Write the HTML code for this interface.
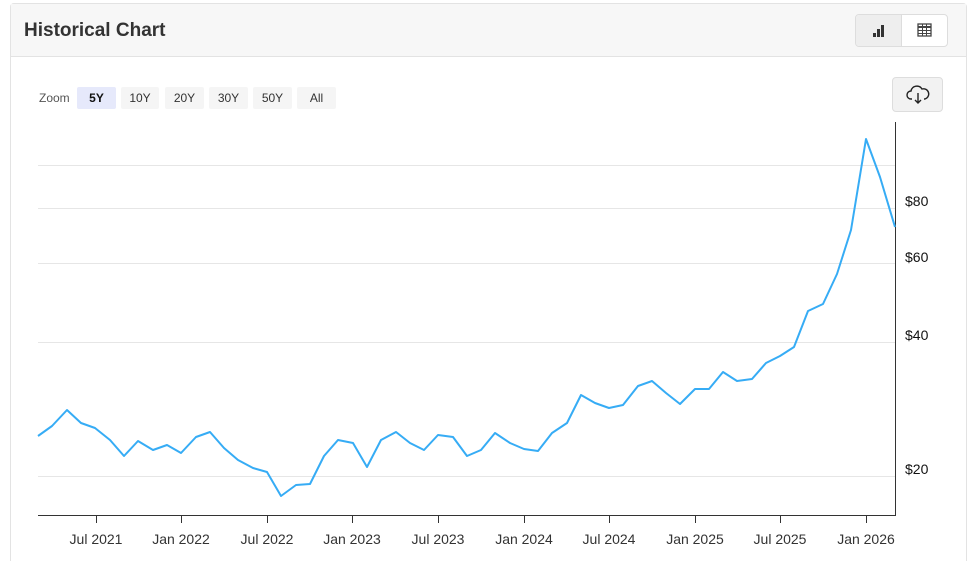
<!DOCTYPE html><html><head><style>
html,body{margin:0;width:972px;height:561px;overflow:hidden}
body{background:#fff;font-family:"Liberation Sans",sans-serif;position:relative}
.card{position:absolute;left:10px;top:3px;width:957px;height:558px;border:1px solid #e3e3e3;border-bottom:none;border-radius:4px 4px 0 0;box-sizing:border-box}
.hdr{position:absolute;left:0;top:0;right:0;height:53px;background:#f7f7f7;border-bottom:1px solid #e3e3e3;box-sizing:border-box}
.t{position:absolute;left:13px;top:16px;font-size:19px;font-weight:bold;color:#333}
.tg{position:absolute;left:844px;top:10px;width:91px;height:31px;border:1px solid #ddd;border-radius:4px;background:#fff;overflow:hidden}
.tg .a{position:absolute;left:0;top:0;width:45px;height:31px;background:#eee;border-right:1px solid #ddd}
.z{position:absolute;top:87px;height:22px;line-height:22px;font-size:12px;color:#333;text-align:center;background:#f5f5f5;border-radius:2px}
.dl{position:absolute;left:892px;top:77px;width:49px;height:33px;background:#f2f2f2;border:1px solid #ddd;border-radius:4px}
</style></head><body>
<div class="card"><div class="hdr"><div class="t">Historical Chart</div>
<div class="tg"><div class="a"><svg width="45" height="31"><rect x="17" y="18" width="3" height="4" fill="#333"/><rect x="21" y="14" width="3" height="8" fill="#333"/><rect x="25" y="10" width="3" height="12" fill="#333"/></svg></div>
<svg style="position:absolute;left:46px;top:0" width="45" height="31"><rect x="16" y="9" width="13" height="12" fill="none" stroke="#444" stroke-width="1.3"/><line x1="16" y1="12" x2="29" y2="12" stroke="#444" stroke-width="2"/><line x1="16" y1="15.5" x2="29" y2="15.5" stroke="#444"/><line x1="16" y1="18.5" x2="29" y2="18.5" stroke="#444"/><line x1="20.5" y1="9" x2="20.5" y2="21" stroke="#444"/><line x1="24.5" y1="9" x2="24.5" y2="21" stroke="#444"/></svg></div></div></div>
<div style="position:absolute;left:39px;top:91px;font-size:12px;color:#555">Zoom</div>
<div class="z" style="left:77px;width:39px;background:#e6e9fb;font-weight:bold;color:#111">5Y</div>
<div class="z" style="left:121px;width:38px">10Y</div>
<div class="z" style="left:165px;width:39px">20Y</div>
<div class="z" style="left:209px;width:39px">30Y</div>
<div class="z" style="left:253px;width:39px">50Y</div>
<div class="z" style="left:297px;width:39px">All</div>
<div class="dl"><svg width="49" height="33"><path d="M19 21h-1a4 4 0 0 1 0-8 6 6 0 0 1 11-2 4.5 4.5 0 0 1 3 10h-1" fill="none" stroke="#222" stroke-width="1.4"/><path d="M25 15v10M22 22l3 3 3-3" fill="none" stroke="#222" stroke-width="1.4"/></svg></div>
<svg style="position:absolute;left:0;top:0" width="972" height="561">
<g stroke="#e6e6e6" stroke-width="1"><line x1="38" y1="165.5" x2="895" y2="165.5"/><line x1="38" y1="208.5" x2="895" y2="208.5"/><line x1="38" y1="263.5" x2="895" y2="263.5"/><line x1="38" y1="342.5" x2="895" y2="342.5"/><line x1="38" y1="476.5" x2="895" y2="476.5"/></g>
<g stroke="#333" stroke-width="1"><line x1="895.5" y1="122" x2="895.5" y2="515"/><line x1="38" y1="515.5" x2="896" y2="515.5"/>
<path d="M96.5 515v8M181.5 515v8M267.5 515v8M352.5 515v8M438.5 515v8M524.5 515v8M609.5 515v8M695.5 515v8M780.5 515v8M866.5 515v8"/></g>
<g font-size="14" fill="#111"><text x="905" y="206">$80</text><text x="905" y="262">$60</text><text x="905" y="340">$40</text><text x="905" y="474">$20</text></g>
<g font-size="14" fill="#333" text-anchor="middle"><text x="96" y="544">Jul 2021</text><text x="181" y="544">Jan 2022</text><text x="267" y="544">Jul 2022</text><text x="352" y="544">Jan 2023</text><text x="438" y="544">Jul 2023</text><text x="524" y="544">Jan 2024</text><text x="609" y="544">Jul 2024</text><text x="695" y="544">Jan 2025</text><text x="780" y="544">Jul 2025</text><text x="866" y="544">Jan 2026</text></g>
<polyline fill="none" stroke="#36acf5" stroke-width="2" stroke-linejoin="round" points="38,436 52,426 67,410 81,423 95,428 110,440 124,456 138,441 153,450 167,445 181,453 196,437 210,432 224,448 238,460 253,468 267,472 281,496 296,485 310,484 324,456 338,440 353,443 367,467 381,440 396,432 410,443 424,450 438,435 453,437 467,456 481,450 495,433 510,443 524,449 538,451 552,433 567,423 581,395 595,403 609,408 623,405 638,386 652,381 666,393 680,404 695,389 709,389 723,372 737,381 752,379 766,363 780,356 794,347 808,311 823,304 837,274 851,230 866,139 880,177 895,227"/>
</svg>
</body></html>
